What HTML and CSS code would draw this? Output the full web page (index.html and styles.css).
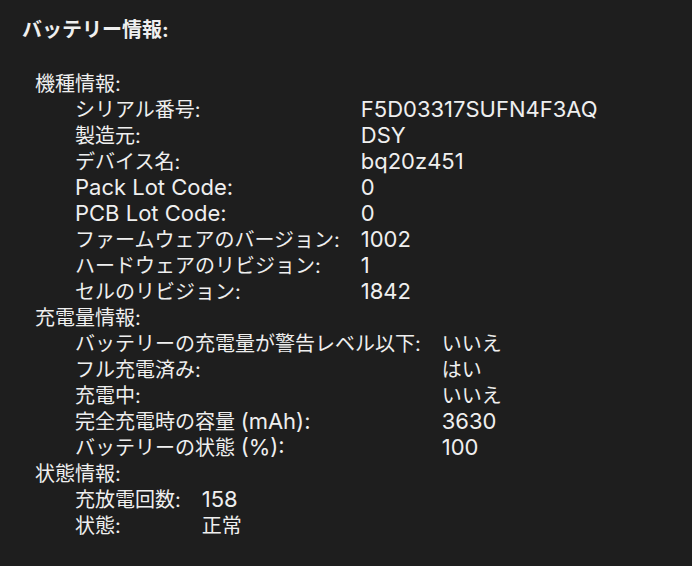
FILE: index.html
```html
<!DOCTYPE html>
<html lang="ja">
<head>
  <meta charset="UTF-8">
  <meta name="viewport" content="width=device-width, initial-scale=1.0">
  <title>バッテリー情報</title>
  <link rel="stylesheet" href="styles.css">
</head>
<body>
<div class="report">
  <h1>バッテリー情報:</h1>

  <div class="section">
    <h2>機種情報:</h2>
    <dl class="rows">
      <dt>シリアル番号:</dt><dd><span class="lat">F5D03317SUFN4F3AQ</span></dd>
      <dt>製造元:</dt><dd><span class="lat">DSY</span></dd>
      <dt>デバイス名:</dt><dd><span class="lat">bq20z451</span></dd>
      <dt><span class="lat">Pack Lot Code:</span></dt><dd><span class="lat">0</span></dd>
      <dt><span class="lat">PCB Lot Code:</span></dt><dd><span class="lat">0</span></dd>
      <dt>ファームウェアのバージョン:</dt><dd><span class="lat">1002</span></dd>
      <dt>ハードウェアのリビジョン:</dt><dd><span class="lat">1</span></dd>
      <dt>セルのリビジョン:</dt><dd><span class="lat">1842</span></dd>
    </dl>
  </div>

  <div class="section">
    <h2>充電量情報:</h2>
    <dl class="rows">
      <dt>バッテリーの充電量が警告レベル以下:</dt><dd>いいえ</dd>
      <dt>フル充電済み:</dt><dd>はい</dd>
      <dt>充電中:</dt><dd>いいえ</dd>
      <dt>完全充電時の容量 <span class="lat">(mAh):</span></dt><dd><span class="lat">3630</span></dd>
      <dt>バッテリーの状態 <span class="lat">(%):</span></dt><dd><span class="lat">100</span></dd>
    </dl>
  </div>

  <div class="section">
    <h2>状態情報:</h2>
    <dl class="rows">
      <dt>充放電回数:</dt><dd><span class="lat">158</span></dd>
      <dt>状態:</dt><dd>正常</dd>
    </dl>
  </div>
</div>
</body>
</html>
```

FILE: styles.css
```css
body {
  margin: 0;
  padding: 0;
  background-color: #1e1e1e;
  color: #efefef;
  font-family: Inter, "Noto Sans CJK JP", sans-serif;
  font-size: 20px;
  line-height: 26px;
}

.report {
  padding: 17px 22px 0 22px;
}

.report h1 {
  margin: 0 0 28px 0;
  font-size: 20px;
  font-weight: bold;
  line-height: 26px;
}

.section {
  padding-left: 13px;
}

.section h2 {
  margin: 0;
  font-size: 20px;
  font-weight: normal;
  line-height: 26px;
}

.rows {
  display: grid;
  grid-template-columns: max-content 1fr;
  column-gap: 21px;
  margin: 0;
  padding-left: 40px;
}

.rows dt,
.rows dd {
  margin: 0;
  white-space: nowrap;
}

/* latin runs are set a bit larger, like the system font in the original */
.lat {
  font-size: 22px;
  line-height: 1;
}
```
